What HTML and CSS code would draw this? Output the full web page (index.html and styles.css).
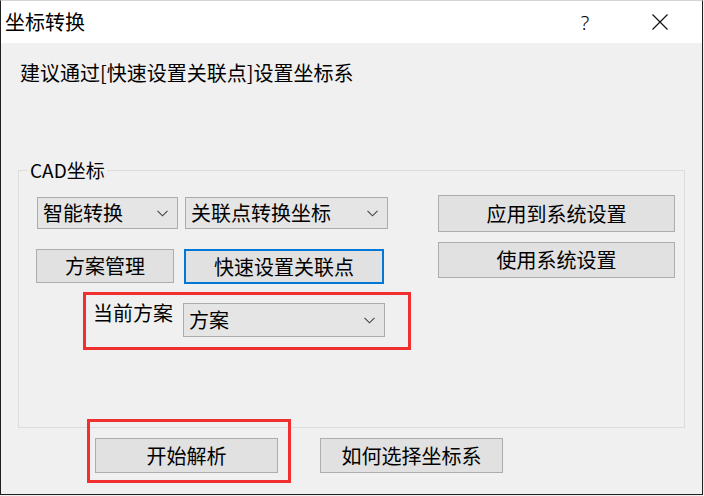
FILE: index.html
```html
<!DOCTYPE html>
<html lang="zh-CN">
<head>
    <meta charset="UTF-8">
    <meta name="viewport" content="width=device-width, initial-scale=1.0">
    <title>坐标转换</title>
    <link rel="stylesheet" href="styles.css">
</head>
<body>
    <div class="window">
        <div class="titlebar">
            <span class="title">坐标转换</span>
            <span class="help">?</span>
            <span class="close">
                <svg width="16" height="16" viewBox="0 0 16 16"><path d="M0.5 0.5 L15.5 15.5 M15.5 0.5 L0.5 15.5" stroke="#111" stroke-width="1.2" fill="none"/></svg>
            </span>
        </div>
        <div class="dialog-body">
            <p class="hint">建议通过[快速设置关联点]设置坐标系</p>

            <fieldset class="group">
                <legend>CAD坐标</legend>
                <div class="group-body">
                    <div class="left-col">
                        <div class="row">
                            <div class="combo combo-mode">
                                <span>智能转换</span>
                                <svg class="chevron" width="11" height="7" viewBox="0 0 11 7"><path d="M0.5 0.8 L5.5 5.8 L10.5 0.8" stroke="#444" stroke-width="1.1" fill="none"/></svg>
                            </div>
                            <div class="combo combo-type">
                                <span>关联点转换坐标</span>
                                <svg class="chevron" width="11" height="7" viewBox="0 0 11 7"><path d="M0.5 0.8 L5.5 5.8 L10.5 0.8" stroke="#444" stroke-width="1.1" fill="none"/></svg>
                            </div>
                        </div>
                        <div class="row row-buttons">
                            <button class="btn btn-plan">方案管理</button>
                            <button class="btn btn-quick">快速设置关联点</button>
                        </div>
                        <div class="mark mark-plan">
                            <span class="plan-label">当前方案</span>
                            <div class="combo combo-plan">
                                <span>方案</span>
                                <svg class="chevron" width="11" height="7" viewBox="0 0 11 7"><path d="M0.5 0.8 L5.5 5.8 L10.5 0.8" stroke="#444" stroke-width="1.1" fill="none"/></svg>
                            </div>
                        </div>
                    </div>
                    <div class="right-col">
                        <button class="btn btn-wide">应用到系统设置</button>
                        <button class="btn btn-wide btn-use">使用系统设置</button>
                    </div>
                </div>
            </fieldset>

            <div class="actions">
                <div class="mark mark-start">
                    <button class="btn btn-start">开始解析</button>
                </div>
                <button class="btn btn-how">如何选择坐标系</button>
            </div>
        </div>
    </div>
</body>
</html>
```

FILE: styles.css
```css
* {
    box-sizing: border-box;
}
body {
    margin: 0;
    background: #f0f0f0;
    font-family: "Noto Sans CJK SC", "Noto Sans", sans-serif;
    color: #000;
}
.window {
    width: 703px;
    height: 495px;
    border-top: 1px solid #d4d4d4;
    border-left: 1px solid #1f1f1f;
    border-right: 1px solid #1f1f1f;
    border-bottom: 1px solid #1f1f1f;
    background: #f0f0f0;
}
.titlebar {
    height: 42px;
    background: #ffffff;
    display: flex;
    align-items: center;
    padding-right: 19px;
}
.title {
    font-size: 20px;
    line-height: 26px;
    padding-left: 4px;
}
.help {
    margin-left: auto;
    width: 24px;
    text-align: center;
    font-family: "Noto Sans", sans-serif;
    font-size: 20px;
    font-weight: 300;
    margin-right: 40px;
}
.close {
    width: 46px;
    height: 16px;
    display: flex;
    justify-content: center;
}
.dialog-body {
    padding-top: 16px;
}
.hint {
    margin: 0 0 0 19px;
    font-size: 20px;
    line-height: 28px;
}
.group {
    margin: 71px 0 0 17px;
    width: 667px;
    padding: 0;
    border: 1px solid #dcdcdc;
    min-width: 0;
}
.group legend {
    margin-left: 9px;
    padding: 0 2px;
    font-size: 19px;
    line-height: 24px;
}
.group-body {
    height: 245px;
    padding: 13px 9px 0 17px;
    display: flex;
    justify-content: space-between;
}
.row {
    display: flex;
    align-items: center;
}
.combo {
    height: 32px;
    display: flex;
    align-items: center;
    justify-content: space-between;
    padding: 0 9px 0 5px;
    background: #e5e5e5;
    border: 1px solid #acacac;
    font-size: 20px;
    line-height: 26px;
}
.combo-mode {
    width: 141px;
    margin: 2px 0 0 1px;
}
.combo-type {
    width: 203px;
    margin: 2px 0 0 7px;
}
.combo-plan {
    width: 202px;
    height: 34px;
    margin-top: 8px;
    margin-left: 10px;
}
.btn {
    font: inherit;
    font-size: 20px;
    line-height: 26px;
    color: #000;
    background: #e1e1e1;
    border: 1px solid #adadad;
    padding: 0;
    margin: 0;
}
.row-buttons {
    margin-top: 20px;
    align-items: flex-start;
}
.btn-plan {
    width: 138px;
    height: 34px;
}
.btn-quick {
    width: 200px;
    height: 35px;
    margin-left: 10px;
    border: 2px solid #0078d7;
}
.mark {
    border: 3px solid #f22f2f;
}
.mark-plan {
    width: 328px;
    height: 58px;
    margin: 8px 0 0 47px;
    padding: 0 0 0 7px;
    display: flex;
    align-items: flex-start;
}
.plan-label {
    font-size: 20px;
    line-height: 26px;
    margin-top: 5px;
}
.right-col {
    display: flex;
    flex-direction: column;
}
.btn-wide {
    width: 237px;
    height: 37px;
}
.btn-use {
    height: 36px;
    margin-top: 10px;
}
.actions {
    display: flex;
    align-items: flex-start;
    margin: -9px 0 0 86px;
}
.mark-start {
    width: 204px;
    height: 64px;
    padding: 16px 10px 7px 5px;
}
.btn-start {
    width: 183px;
    height: 35px;
}
.btn-how {
    width: 183px;
    height: 35px;
    margin: 19px 0 0 29px;
}
```
